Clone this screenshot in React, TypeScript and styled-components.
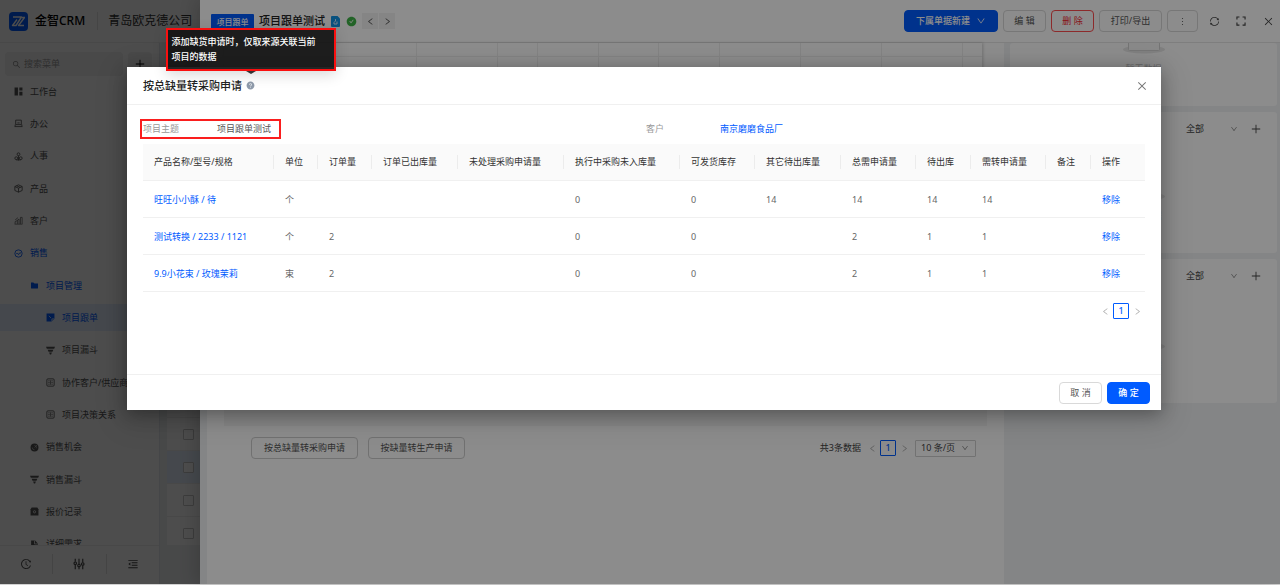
import React from "react";
import styled, { createGlobalStyle, css } from "styled-components";
import {
  AiOutlineSearch,
  AiOutlinePlus,
  AiOutlineHistory,
  AiOutlineMenuFold,
  AiFillFolder,
  AiOutlineClose,
  AiOutlineLeft,
  AiOutlineRight,
  AiOutlineDown,
  AiFillQuestionCircle,
  AiFillCheckCircle,
  AiOutlineMore,
  AiOutlineSync,
} from "react-icons/ai";

const blue = "#005bff";
const maskColor = "rgba(0, 0, 0, 0.45)";

const GlobalStyle = createGlobalStyle`
  *, *::before, *::after { box-sizing: border-box; }
  html, body { margin: 0; height: 100%; overflow: hidden; background: #d2d2d2; }
  body, button, input, select {
    font-family: "Noto Sans", "Noto Sans CJK SC", sans-serif;
    font-size: 9px;
    line-height: 14px;
    color: #444;
  }
  button { cursor: pointer; }
  a { color: ${blue}; text-decoration: none; }
  ul { list-style: none; margin: 0; padding: 0; }
  svg { display: block; flex: none; }
`;

/* ---------- application behind the drawer ---------- */

const Shell = styled.div`
  position: fixed;
  inset: 0 0 1px 0;
  display: flex;
  flex-direction: column;
  background: #fff;
`;

const Brand = styled.header`
  display: flex;
  align-items: center;
  height: 43px;
  padding: 0 9px;
  border-bottom: 1px solid #f0f0f0;
  font-size: 12px;
  line-height: 18px;
  color: #222;
`;

const BrandName = styled.strong`
  margin-left: 7px;
  padding-right: 12px;
  border-right: 1px solid #e8e8e8;
  font-weight: 500;
  color: #000;
`;

const Company = styled.span`
  margin-left: 10px;
  color: #333;
`;

const ShellBody = styled.div`
  flex: 1;
  min-height: 0;
  display: flex;
`;

const Sidebar = styled.nav`
  width: 160px;
  display: flex;
  flex-direction: column;
  border-right: 1px solid #e6eaee;
`;

const SearchRow = styled.div`
  display: flex;
  gap: 5px;
  padding: 9px 7px 2px 5px;
`;

const SearchBox = styled.label`
  flex: 1;
  display: flex;
  align-items: center;
  gap: 3px;
  height: 24px;
  padding: 0 7px;
  border-radius: 4px;
  background: #f2f2f2;
  color: #888;
`;

const SearchInput = styled.input`
  width: 100%;
  padding: 0;
  border: 0;
  background: none;
  outline: none;
  &::placeholder { color: #999; }
`;

const AddButton = styled.button`
  width: 24px;
  height: 24px;
  display: grid;
  place-items: center;
  padding: 0;
  border: 0;
  border-radius: 4px;
  background: #f5f5f5;
  color: #000;
`;

const MenuScroll = styled.div`
  flex: 1;
  min-height: 0;
  overflow: hidden;
`;

const Menu = styled.ul`
  display: flex;
  flex-direction: column;
  justify-content: space-between;
  min-height: 480px;
`;

const MenuLink = styled.a<{ $level: number; $active?: boolean; $selected?: boolean }>`
  display: flex;
  align-items: center;
  gap: 7px;
  height: 27px;
  padding-left: ${(p) => 14 + p.$level * 16}px;
  white-space: nowrap;
  overflow: hidden;
  color: ${(p) => (p.$active ? blue : "#555")};
  background: ${(p) => (p.$selected ? "#e6f1ff" : "transparent")};
`;

const SidebarFooter = styled.div`
  display: flex;
  height: 39px;
  padding: 8px 0;
  border-top: 1px solid #eee;
`;

const FooterButton = styled.button`
  flex: 1;
  display: grid;
  place-items: center;
  height: 20px;
  padding: 0;
  border: 0;
  border-right: 1px solid #e4e4e4;
  background: none;
  &:last-child { border-right: 0; }
`;

const ListPane = styled.div`
  flex: 1;
  display: flex;
  padding: 12px 0 39px 7px;
  background: #f0f2f5;
`;

const List = styled.div`
  flex: 1;
  overflow: hidden;
`;

const ListRow = styled.label<{ $selected?: boolean }>`
  height: 33px;
  display: flex;
  align-items: center;
  padding-left: 16px;
  border-bottom: 1px solid #eee;
  background: ${(p) => (p.$selected ? "#e6f0ff" : "#fff")};
`;

const Tick = styled.input`
  appearance: none;
  width: 11px;
  height: 11px;
  margin: 0;
  border: 1px solid #c8c8c8;
  border-radius: 1px;
  background: #fff;
`;

/* ---------- drawer ---------- */

const Mask = styled.div`
  position: fixed;
  inset: 0 0 1px 0;
  background: ${maskColor};
`;

const Drawer = styled.section`
  position: fixed;
  inset: 0 0 1px 200px;
  display: flex;
  flex-direction: column;
  background: #f0f2f5;
  box-shadow: -4px 0 16px rgba(0, 0, 0, 0.16);
`;

const DrawerHeader = styled.header`
  display: flex;
  align-items: center;
  height: 43px;
  padding: 0 1px 0 11px;
  border-bottom: 1px solid #e6e6e6;
  background: #fff;
`;

const Tag = styled.span`
  min-width: 43px;
  border-radius: 1px;
  background: ${blue};
  color: #fff;
  font-size: 8px;
  font-weight: 500;
  line-height: 15px;
  text-align: center;
`;

const DrawerTitle = styled.h1`
  margin: 0 6px 0 5px;
  font-size: 11px;
  font-weight: 500;
  line-height: 16px;
  color: #222;
`;

const Status = styled.span`
  margin: 0 5px 0 6px;
  color: #3fb548;
`;

const Pager = styled.div`
  display: flex;
  gap: 1px;
`;

const PagerButton = styled.button`
  width: 16px;
  height: 16px;
  display: grid;
  place-items: center;
  padding: 0;
  border: 0;
  background: #f2f2f2;
`;

const HeaderActions = styled.div`
  display: flex;
  align-items: center;
  gap: 5px;
  margin-left: auto;
`;

const Button = styled.button<{ $kind?: "primary" | "danger" }>`
  display: inline-flex;
  align-items: center;
  justify-content: center;
  gap: 6px;
  height: 22px;
  padding: 0 10px;
  border: 1px solid #d9d9d9;
  border-radius: 4px;
  background: transparent;
  white-space: nowrap;
  min-width: 43px;
  color: #555;
  ${(p) =>
    p.$kind === "primary" &&
    css`
      background: ${blue};
      border-color: ${blue};
      color: #fff;
      font-weight: 500;
    `}
  ${(p) =>
    p.$kind === "danger" &&
    css`
      border-color: #ff4d4f;
      color: #f5222d;
    `}
`;

const WideButton = styled(Button)`
  min-width: 94px;
`;

const MidButton = styled(Button)`
  min-width: 63px;
`;

const MoreButton = styled(Button)`
  min-width: 31px;
  padding: 0;
`;

const IconButton = styled.button`
  width: 22px;
  height: 22px;
  display: grid;
  place-items: center;
  padding: 0;
  border: 0;
  background: none;
`;

const DrawerBody = styled.div`
  flex: 1;
  min-height: 0;
  display: flex;
  gap: 6px;
  padding: 0 3px 0 7px;
`;

const MainPanel = styled.div`
  flex: 1;
  padding-left: 17px;
  background: #fff;
`;

const Ledger = styled.div`
  display: grid;
  grid-template-columns: 193fr 81fr 40fr 61fr 60fr 61fr 81fr 81fr 81fr 19fr;
  margin-right: 22px;
  box-shadow: 1px 0 3px rgba(0, 0, 0, 0.2);
`;

const LedgerCell = styled.div<{ $tall?: boolean }>`
  height: ${(p) => (p.$tall ? 14 : 340)}px;
  border-right: 1px solid #efefef;
  border-bottom: 1px solid #efefef;
  &:nth-child(10n) { border-right: 0; }
`;

const LedgerFoot = styled.div`
  height: 29px;
  margin-right: 17px;
  background: #f5f5f5;
`;

const PanelActions = styled.div`
  display: flex;
  align-items: center;
  gap: 10px;
  margin: 11px 28px 0 27px;
`;

const OutlineButton = styled(Button)`
  min-width: 97px;
  border-color: #cecece;
  &:first-child { min-width: 107px; }
`;

const PageBar = styled.div`
  display: flex;
  align-items: center;
  gap: 3px;
  margin-left: auto;
`;

const Pagination = styled.div`
  display: flex;
  justify-content: flex-end;
  align-items: center;
`;

const PageStep = styled.button`
  width: 16px;
  height: 16px;
  display: grid;
  place-items: center;
  padding: 0;
  border: 0;
  background: none;
  color: #aaa;
`;

const PageNumber = styled.button`
  width: 16px;
  height: 16px;
  padding: 0;
  border: 1px solid ${blue};
  border-radius: 1px;
  background: none;
  color: ${blue};
  font-weight: 500;
  line-height: 14px;
`;

const SelectWrap = styled.label<{ $boxed?: boolean }>`
  display: flex;
  align-items: center;
  color: #888;
  height: 17px;
  ${(p) =>
    p.$boxed &&
    css`
      width: 61px;
      padding: 0 6px 0 5px;
      border: 1px solid #d0d0d0;
      border-radius: 1px;
    `}
`;

const Select = styled.select<{ $width: number }>`
  appearance: none;
  width: ${(p) => p.$width}px;
  padding: 0;
  border: 0;
  background: none;
  color: #444;
  outline: none;
`;

const SideColumn = styled.aside`
  width: 267px;
  display: flex;
  flex-direction: column;
  gap: 6px;
`;

const Card = styled.section<{ $height: number }>`
  height: ${(p) => p.$height}px;
  display: flex;
  flex-direction: column;
  justify-content: flex-end;
  padding-bottom: 30px;
  border-radius: 3px;
  background: #fff;
  overflow: hidden;
`;

const CardHead = styled.div`
  display: flex;
  align-items: center;
  justify-content: flex-end;
  gap: 12px;
  height: 34px;
  margin-bottom: auto;
  padding-right: 15px;
`;

const Empty = styled.div`
  display: flex;
  flex-direction: column;
  align-items: center;
  gap: 7px;
  color: #bbb;
`;

/* ---------- modal ---------- */

const ModalLayer = styled(Mask)`
  padding: 67px 119px 0 127px;
`;

const Modal = styled.section`
  background: #fff;
  box-shadow: 0 4px 16px rgba(0, 0, 0, 0.3), 0 8px 28px 6px rgba(0, 0, 0, 0.1);
`;

const ModalHeader = styled.header`
  display: flex;
  align-items: center;
  height: 38px;
  padding: 0 8px 0 16px;
  border-bottom: 1px solid #f0f0f0;
`;

const ModalTitle = styled.h2`
  margin: 0;
  font-size: 11px;
  font-weight: 500;
  line-height: 16px;
  color: #222;
`;

const Help = styled.span`
  position: relative;
  margin-left: 4px;
  color: #8f9bab;
`;

const Tooltip = styled.span`
  position: absolute;
  left: 50%;
  bottom: 19px;
  width: 170px;
  padding: 4px 13px 5px 4px;
  border: 2px solid #fa0f0f;
  background: rgba(20, 20, 20, 0.93);
  color: #fff;
  font-weight: 500;
  line-height: 15px;
  transform: translateX(-50%);
  box-shadow: 0 4px 14px rgba(0, 0, 0, 0.15);
  &::after {
    content: "";
    position: absolute;
    top: 100%;
    left: 50%;
    margin: 2px 0 0 -5px;
    border: 5px solid transparent;
    border-top: 3px solid #333;
    border-bottom: 0;
  }
`;

const CloseButton = styled(IconButton)`
  margin-left: auto;
  color: #777;
`;

const ModalBody = styled.div`
  min-height: 269px;
  padding: 17px 16px 0;
`;

const Fields = styled.dl`
  display: grid;
  grid-template-columns: 1fr 1fr;
  gap: 4px;
  margin: 0 0 8px;
`;

const Field = styled.div<{ $marked?: boolean }>`
  display: flex;
  justify-self: start;
  height: 14px;
  padding-right: 4px;
  outline: ${(p) => (p.$marked ? "2px solid #fa1e1e" : "none")};
  outline-offset: 1px;
`;

const Label = styled.dt`
  width: 74px;
  color: #999;
`;

const Value = styled.dd`
  min-width: 57px;
  margin: 0;
  color: #555;
`;

const Table = styled.table`
  width: 100%;
  table-layout: fixed;
  border-collapse: separate;
  border-spacing: 0;
`;

const HeadCell = styled.th`
  height: 37px;
  padding: 0;
  border-bottom: 1px solid #f0f0f0;
  background: #fafafa;
  color: #333;
  font-weight: 400;
  text-align: left;
  white-space: nowrap;
`;

const HeadText = styled.div`
  padding-left: 11px;
  border-right: 1px solid #ececec;
  ${HeadCell}:last-child & { border-right: 0; }
`;

const Cell = styled.td`
  height: 37px;
  padding: 2px 0 0 11px;
  border-bottom: 1px solid #f0f0f0;
  color: #666;
  white-space: nowrap;
`;

const TablePager = styled(Pagination)`
  margin-top: 11px;
`;

const ModalFooter = styled.footer`
  display: flex;
  justify-content: flex-end;
  gap: 5px;
  height: 36px;
  padding: 7px 11px 0;
  border-top: 1px solid #f0f0f0;
`;

/* ---------- drawings ---------- */

const Glyph = ({ size = 9, children }: { size?: number; children: React.ReactNode }) => (
  <svg width={size} height={size} viewBox="0 0 16 16" fill="none" stroke="currentColor" strokeWidth="1.5" aria-hidden>
    {children}
  </svg>
);

const Logo = () => (
  <svg width="19" height="19" viewBox="0 0 19 19" aria-hidden>
    <rect width="19" height="19" rx="4" fill={blue} />
    <path
      d="M4 5h8.500L7 13.500H3.500L8 7.500M15.500 5.500 9.500 13.500H15M16 5.500H13"
      fill="none"
      stroke="#fff"
      strokeWidth="1.400"
      strokeLinejoin="round"
    />
  </svg>
);

const glyphs: Record<string, React.ReactNode> = {
  board: (
    <Glyph>
      <path d="M1 1h6v14H1zM9.500 1H15v5H9.500zM9.500 8.500H15V15H9.500z" fill="currentColor" stroke="none" />
    </Glyph>
  ),
  desk: (
    <Glyph>
      <path d="M3 2h10v8H3zM1 13.500h14M6 7h4M2 10v3M14 10v3" />
    </Glyph>
  ),
  people: (
    <Glyph>
      <circle cx="8" cy="4" r="2.500" />
      <circle cx="4" cy="11" r="2.500" />
      <circle cx="12" cy="11" r="2.500" />
      <path d="M8 6.500V15M4 14h8" />
    </Glyph>
  ),
  cube: (
    <Glyph>
      <path d="M8 1.500 14.500 4.500v7L8 14.500 1.500 11.500v-7zM1.500 4.500 8 7.500l6.500-3M8 7.500v7M4.500 3l6.500 3" />
    </Glyph>
  ),
  chart: (
    <Glyph>
      <path d="M1 14.500h14M2 14v-4l4-2M6 14V7.500l3-2V14M11.500 14V2.500h3V14M2 7l5-4" strokeWidth="1.200" />
    </Glyph>
  ),
  sale: (
    <Glyph>
      <circle cx="8" cy="8" r="6.500" />
      <path d="M4 8h2.500l1.500 2 2-3h2.500" />
    </Glyph>
  ),
  folder: <AiFillFolder size={9} />,
  note: (
    <Glyph>
      <path d="M1 1h14v9l-5 5H1z" fill="currentColor" stroke="none" />
      <path d="M5 5l4 4M15 10.500h-4.500V15" stroke="#dcebff" />
    </Glyph>
  ),
  funnel: (
    <Glyph>
      <path d="M0 1.500h16l-1.500 3.500h-13zM3 6.500h10L11.500 10h-7zM5.500 11.500h5L9 15H7z" fill="currentColor" stroke="none" />
    </Glyph>
  ),
  book: (
    <Glyph>
      <rect x="1.500" y="1.500" width="13" height="13" rx="2" />
      <path d="M8 4v8M4 5h2.500M4 8h2.500M4 11h2.500M9.500 5H12M9.500 8H12M9.500 11H12" strokeWidth="1.200" />
    </Glyph>
  ),
  target: (
    <Glyph>
      <circle cx="8" cy="8" r="7" fill="currentColor" stroke="none" />
      <path d="M4 8a4 4 0 0 0 4 4M8 8l5-5M8 4.500a3.500 3.500 0 0 1 3 5" stroke="#eee" strokeWidth="1" />
    </Glyph>
  ),
  record: (
    <Glyph>
      <path d="M3 1h10l2 3v11H1V4z" fill="currentColor" stroke="none" />
      <circle cx="8" cy="8.500" r="2" stroke="#eee" />
    </Glyph>
  ),
  file: (
    <Glyph>
      <path d="M2 1h7l5 5v9H2z" fill="currentColor" stroke="none" />
      <path d="M8 1v6h6M5 10h5" stroke="#eee" />
    </Glyph>
  ),
};

const Sliders = () => (
  <Glyph size={12}>
    <path d="M3 1v4M3 9v6M8 1v7M8 12v3M13 1v5M13 10v5" />
    <circle cx="3" cy="7" r="1.700" />
    <circle cx="8" cy="10" r="1.700" />
    <circle cx="13" cy="8" r="1.700" />
  </Glyph>
);

const Expand = () => (
  <Glyph size={10}>
    <path d="M1.500 5.500v-4h4M10.500 1.500h4v4M14.500 10.500v4h-4M5.500 14.500h-4v-4" strokeWidth="1.800" />
  </Glyph>
);

const Badge = () => (
  <svg width="9" height="11" viewBox="0 0 9 11" aria-hidden>
    <path d="M1 0h5.500L9 2.500V10a1 1 0 0 1-1 1H1a1 1 0 0 1-1-1V1a1 1 0 0 1 1-1z" fill="#1296e8" />
    <path d="M4.500 3v2L3 6.500V8h3V5.500" fill="none" stroke="#cfeaff" />
  </svg>
);

const EmptyDrawing = () => (
  <svg width="42" height="28" viewBox="0 0 42 28" fill="none" aria-hidden>
    <ellipse cx="21" cy="22.500" rx="21" ry="4" fill="#e8e8e8" />
    <path d="M5.500 10 11 2h20l5.500 8v12.500a1 1 0 0 1-1 1h-29a1 1 0 0 1-1-1z" fill="#fafafa" stroke="#d4d4d4" />
    <path d="M5.500 10H15c0 3 2 4 6 4s6-1 6-4h9.500" stroke="#d4d4d4" />
  </svg>
);

/* ---------- data ---------- */

const menu: { label: string; icon: string; level: number; active?: boolean; selected?: boolean }[] = [
  { label: "工作台", icon: "board", level: 0 },
  { label: "办公", icon: "desk", level: 0 },
  { label: "人事", icon: "people", level: 0 },
  { label: "产品", icon: "cube", level: 0 },
  { label: "客户", icon: "chart", level: 0 },
  { label: "销售", icon: "sale", level: 0, active: true },
  { label: "项目管理", icon: "folder", level: 1, active: true },
  { label: "项目跟单", icon: "note", level: 2, active: true, selected: true },
  { label: "项目漏斗", icon: "funnel", level: 2 },
  { label: "协作客户/供应商", icon: "book", level: 2 },
  { label: "项目决策关系", icon: "book", level: 2 },
  { label: "销售机会", icon: "target", level: 1 },
  { label: "销售漏斗", icon: "funnel", level: 1 },
  { label: "报价记录", icon: "record", level: 1 },
  { label: "详细需求", icon: "file", level: 1 },
];

const columns: [string, number][] = [
  ["产品名称/型号/规格", 131],
  ["单位", 44],
  ["订单量", 54],
  ["订单已出库量", 86],
  ["未处理采购申请量", 106],
  ["执行中采购未入库量", 116],
  ["可发货库存", 75],
  ["其它待出库量", 86],
  ["总需申请量", 75],
  ["待出库", 55],
  ["需转申请量", 75],
  ["备注", 45],
  ["操作", 54],
];

const rows: string[][] = [
  ["旺旺小小酥 / 待", "个", "", "", "", "0", "0", "14", "14", "14", "14", ""],
  ["测试转换 / 2233 / 1121", "个", "2", "", "", "0", "0", "", "2", "1", "1", ""],
  ["9.9小花束 / 玫瑰茉莉", "束", "2", "", "", "0", "0", "", "2", "1", "1", ""],
];

const Pages = () => (
  <>
    <PageStep aria-label="上一页">
      <AiOutlineLeft size={9} />
    </PageStep>
    <PageNumber>1</PageNumber>
    <PageStep aria-label="下一页">
      <AiOutlineRight size={9} />
    </PageStep>
  </>
);

const EmptyState = () => (
  <Empty>
    <EmptyDrawing />
    暂无数据
  </Empty>
);

const FilterHead = () => (
  <CardHead>
    <SelectWrap>
      <Select $width={44} aria-label="筛选" defaultValue="all">
        <option value="all">全部</option>
      </Select>
      <AiOutlineDown size={8} />
    </SelectWrap>
    <AiOutlinePlus size={12} />
  </CardHead>
);

export default function App() {
  return (
    <>
      <GlobalStyle />
      <Shell>
        <Brand>
          <Logo />
          <BrandName>金智CRM</BrandName>
          <Company>青岛欧克德公司</Company>
        </Brand>
        <ShellBody>
          <Sidebar>
            <SearchRow>
              <SearchBox>
                <AiOutlineSearch size={9} />
                <SearchInput placeholder="搜索菜单" aria-label="搜索菜单" />
              </SearchBox>
              <AddButton aria-label="新增">
                <AiOutlinePlus size={12} />
              </AddButton>
            </SearchRow>
            <MenuScroll>
              <Menu>
                {menu.map((m) => (
                  <li key={m.label}>
                    <MenuLink href="#" $level={m.level} $active={m.active} $selected={m.selected}>
                      {glyphs[m.icon]}
                      {m.label}
                    </MenuLink>
                  </li>
                ))}
              </Menu>
            </MenuScroll>
            <SidebarFooter>
              <FooterButton aria-label="历史">
                <AiOutlineHistory size={12} />
              </FooterButton>
              <FooterButton aria-label="设置">
                <Sliders />
              </FooterButton>
              <FooterButton aria-label="收起">
                <AiOutlineMenuFold size={12} />
              </FooterButton>
            </SidebarFooter>
          </Sidebar>
          <ListPane>
            <List>
              {Array.from({ length: 15 }, (_, i) => (
                <ListRow key={i} $selected={i === 12}>
                  <Tick type="checkbox" aria-label={`选择第${i + 1}行`} />
                </ListRow>
              ))}
            </List>
          </ListPane>
        </ShellBody>
      </Shell>

      <Mask />

      <Drawer>
        <DrawerHeader>
          <Tag>项目跟单</Tag>
          <DrawerTitle>项目跟单测试</DrawerTitle>
          <Badge />
          <Status>
            <AiFillCheckCircle size={11} />
          </Status>
          <Pager>
            <PagerButton aria-label="上一条">
              <AiOutlineLeft size={9} />
            </PagerButton>
            <PagerButton aria-label="下一条">
              <AiOutlineRight size={9} />
            </PagerButton>
          </Pager>
          <HeaderActions>
            <WideButton $kind="primary">
              下属单据新建
              <AiOutlineDown size={10} />
            </WideButton>
            <Button>编 辑</Button>
            <Button $kind="danger">删 除</Button>
            <MidButton>打印/导出</MidButton>
            <MoreButton aria-label="更多">
              <AiOutlineMore size={11} />
            </MoreButton>
            <IconButton aria-label="刷新">
              <AiOutlineSync size={11} />
            </IconButton>
            <IconButton aria-label="全屏">
              <Expand />
            </IconButton>
            <IconButton aria-label="关闭">
              <AiOutlineClose size={11} />
            </IconButton>
          </HeaderActions>
        </DrawerHeader>
        <DrawerBody>
          <MainPanel>
            <Ledger>
              {Array.from({ length: 20 }, (_, i) => (
                <LedgerCell key={i} $tall={i < 10} />
              ))}
            </Ledger>
            <LedgerFoot />
            <PanelActions>
              <OutlineButton>按总缺量转采购申请</OutlineButton>
              <OutlineButton>按缺量转生产申请</OutlineButton>
              <PageBar>
                <span>共3条数据</span>
                <Pagination>
                  <Pages />
                </Pagination>
                <SelectWrap $boxed>
                  <Select $width={40} aria-label="每页条数" defaultValue="10">
                    <option value="10">10 条/页</option>
                  </Select>
                  <AiOutlineDown size={8} />
                </SelectWrap>
              </PageBar>
            </PanelActions>
          </MainPanel>
          <SideColumn>
            <Card $height={63}>
              <EmptyState />
            </Card>
            <Card $height={141}>
              <FilterHead />
              <EmptyState />
            </Card>
            <Card $height={144}>
              <FilterHead />
              <EmptyState />
            </Card>
          </SideColumn>
        </DrawerBody>
      </Drawer>

      <ModalLayer>
        <Modal role="dialog" aria-labelledby="modal-title">
          <ModalHeader>
            <ModalTitle id="modal-title">按总缺量转采购申请</ModalTitle>
            <Help>
              <AiFillQuestionCircle size={9} />
              <Tooltip role="tooltip">添加缺货申请时，仅取来源关联当前项目的数据</Tooltip>
            </Help>
            <CloseButton aria-label="关闭">
              <AiOutlineClose size={12} />
            </CloseButton>
          </ModalHeader>
          <ModalBody>
            <Fields>
              <Field $marked>
                <Label>项目主题</Label>
                <Value>项目跟单测试</Value>
              </Field>
              <Field>
                <Label>客户</Label>
                <Value>
                  <a href="#">南京磨磨食品厂</a>
                </Value>
              </Field>
            </Fields>
            <Table>
              <colgroup>
                {columns.map(([name, width]) => (
                  <col key={name} width={width} />
                ))}
              </colgroup>
              <thead>
                <tr>
                  {columns.map(([name]) => (
                    <HeadCell key={name}>
                      <HeadText>{name}</HeadText>
                    </HeadCell>
                  ))}
                </tr>
              </thead>
              <tbody>
                {rows.map((row) => (
                  <tr key={row[0]}>
                    {row.map((text, i) => (
                      <Cell key={i}>{i === 0 ? <a href="#">{text}</a> : text}</Cell>
                    ))}
                    <Cell>
                      <a href="#">移除</a>
                    </Cell>
                  </tr>
                ))}
              </tbody>
            </Table>
            <TablePager>
              <Pages />
            </TablePager>
          </ModalBody>
          <ModalFooter>
            <Button>取 消</Button>
            <Button $kind="primary">确 定</Button>
          </ModalFooter>
        </Modal>
      </ModalLayer>
    </>
  );
}
